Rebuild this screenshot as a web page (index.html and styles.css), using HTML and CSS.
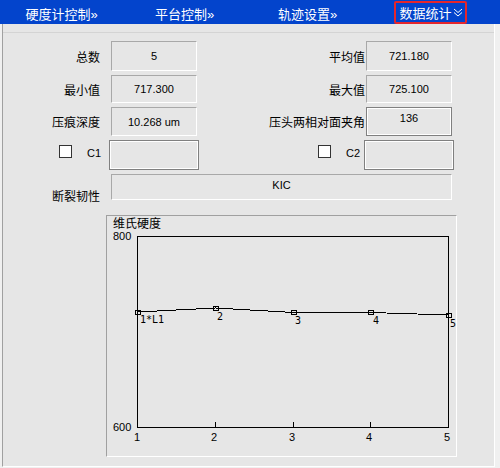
FILE: index.html
```html
<!DOCTYPE html>
<html lang="zh-CN">
<head>
    <meta charset="UTF-8">
    <title>数据统计</title>
    <link rel="stylesheet" href="styles.css">
</head>
<body>
    <nav class="tabs">
        <a href="#" class="tab">硬度计控制»</a>
        <a href="#" class="tab">平台控制»</a>
        <a href="#" class="tab">轨迹设置»</a>
        <a href="#" class="tab"><span class="tab-active">数据统计<svg class="chev" width="10" height="9" viewBox="0 0 10 9"><polyline points="1,1 5,4.5 9,1" /><polyline points="1,4.5 5,8 9,4.5" /></svg></span></a>
    </nav>

    <main class="panel">
        <div class="panel-head"></div>

        <div class="stats">
            <span class="lbl">总数</span>
            <div class="val">5</div>
            <span class="lbl lbl-right">平均值</span>
            <div class="val">721.180</div>

            <span class="lbl">最小值</span>
            <div class="val">717.300</div>
            <span class="lbl lbl-right">最大值</span>
            <div class="val">725.100</div>

            <span class="lbl">压痕深度</span>
            <div class="val">10.268 um</div>
            <span class="lbl lbl-right">压头两相对面夹角</span>
            <div class="val val-deep val-top">136</div>

            <span class="lbl lbl-check"><span class="check"></span><span class="cname">C1</span></span>
            <div class="val val-deep val-wide"></div>
            <span class="lbl lbl-check lbl-right2"><span class="check"></span><span class="cname">C2</span></span>
            <div class="val val-deep val-wide"></div>

            <span class="lbl lbl-low">断裂韧性</span>
            <div class="val val-top val-span">KIC</div>
        </div>

        <div class="chart">
            <svg width="349" height="240" viewBox="0 0 349 240">
                <text class="chart-title" x="6" y="12">维氏硬度</text>
                <text class="axis-txt" x="6" y="24">800</text>
                <text class="axis-txt" x="6" y="215">600</text>

                <rect x="30.5" y="20.5" width="311" height="191" fill="none" stroke="#000" />

                <!-- ticks on the x axis -->
                <g stroke="#000" shape-rendering="crispEdges">
                    <line x1="108.5" y1="206" x2="108.5" y2="211" />
                    <line x1="186.5" y1="206" x2="186.5" y2="211" />
                    <line x1="263.5" y1="206" x2="263.5" y2="211" />
                </g>

                <g class="axis-txt" text-anchor="middle">
                    <text x="30" y="225">1</text>
                    <text x="107" y="225">2</text>
                    <text x="185" y="225">3</text>
                    <text x="262" y="225">4</text>
                    <text x="340" y="225">5</text>
                </g>

                <!-- hardness per point, 600..800 mapped onto y 211..20 -->
                <polyline points="30.5,96 108.5,92 186.5,96.5 263.5,96.5 341.5,99" fill="none" stroke="#000" shape-rendering="crispEdges" />
                <g fill="none" stroke="#000" shape-rendering="crispEdges">
                    <rect x="28.5" y="94.5" width="5" height="4" />
                    <rect x="106.5" y="90.5" width="5" height="4" />
                    <rect x="184.5" y="94.5" width="5" height="4" />
                    <rect x="261.5" y="94.5" width="5" height="4" />
                    <rect x="339.5" y="97.5" width="5" height="4" />
                </g>
                <g class="pt-txt">
                    <text x="33" y="107">1*L1</text>
                    <text x="110" y="104">2</text>
                    <text x="188" y="108">3</text>
                    <text x="266" y="108">4</text>
                    <text x="343" y="111">5</text>
                </g>
            </svg>
        </div>
    </main>
</body>
</html>
```

FILE: styles.css
```css
* {
    box-sizing: border-box;
    margin: 0;
    padding: 0;
}

body {
    width: 500px;
    height: 468px;
    overflow: hidden;
    background: #f0f0f0;
    font-family: "Liberation Sans", "Noto Sans CJK SC", sans-serif;
    color: #000;
}

/* top tab strip */
.tabs {
    display: grid;
    grid-template-columns: repeat(4, 123px);
    height: 24px;
    background: #0344cc;
}

.tab {
    display: flex;
    align-items: center;
    justify-content: center;
    padding-top: 2px;
    color: #fff;
    font-size: 13px;
    text-decoration: none;
    white-space: nowrap;
}

.tab-active {
    display: inline-flex;
    align-items: center;
    height: 23px;
    margin-top: -1px;
    padding: 0 2px 0 3px;
    border: 2px solid #e5262c;
    border-radius: 2px;
}

.chev {
    margin-left: 1px;
}

.chev polyline {
    fill: none;
    stroke: #fff;
    stroke-width: 1;
}

/* main panel */
.panel {
    margin-left: 2px;
    width: 493px;
    height: 443px;
    background: #e6e6e6;
    border-left: 1px solid #a0a0a0;
    border-right: 1px solid #fff;
    border-bottom: 1px solid #fff;
}

.panel-head {
    height: 9px;
    border-bottom: 1px solid #d4d4d4;
}

.stats {
    display: grid;
    grid-template-columns: 108px 86px 169px 86px;
    grid-template-rows: 30px 28px 29px 30px 26px;
    row-gap: 4px;
    margin-top: 8px;
    align-items: center;
}

.lbl {
    font-family: "Noto Sans CJK SC", sans-serif;
    font-size: 12px;
    text-align: right;
    padding-right: 11px;
    white-space: nowrap;
}

.lbl-right {
    padding-right: 1px;
}

.lbl-low {
    align-self: end;
    margin-bottom: -4px;
}

.lbl-check {
    display: flex;
    justify-content: flex-end;
    align-items: center;
    gap: 15px;
    padding-right: 10px;
    margin-top: -8px;
}

.lbl-right2 {
    padding-right: 6px;
}

.check {
    width: 13px;
    height: 13px;
    background: #fff;
    border: 1px solid #333;
}

.cname {
    font-family: "Liberation Sans", sans-serif;
    font-size: 11px;
    margin-top: 4px;
}

.val {
    height: 100%;
    display: flex;
    align-items: center;
    justify-content: center;
    font-size: 11px;
    border: 1px solid;
    border-color: #a8a8a8 #fff #fff #a8a8a8;
}

.val-deep {
    border: 1px solid #808080;
    box-shadow: inset 0 0 0 1px #fff;
}

.val-top {
    align-items: flex-start;
    padding-top: 4px;
}

.val-wide {
    margin: 0 -2px;
}

.val-span {
    grid-column: 2 / 5;
}

/* chart group */
.chart {
    margin: 15px 0 0 103px;
    width: 351px;
    height: 242px;
    border: 1px solid;
    border-color: #a0a0a0 #fff #fff #a0a0a0;
}

.chart svg {
    display: block;
    overflow: visible;
}

.chart-title {
    font-family: "Noto Sans CJK SC", sans-serif;
    font-size: 12px;
}

.axis-txt {
    font-family: "Liberation Sans", sans-serif;
    font-size: 11px;
}

.pt-txt {
    font-family: "DejaVu Sans Mono", monospace;
    font-size: 10px;
}
```
